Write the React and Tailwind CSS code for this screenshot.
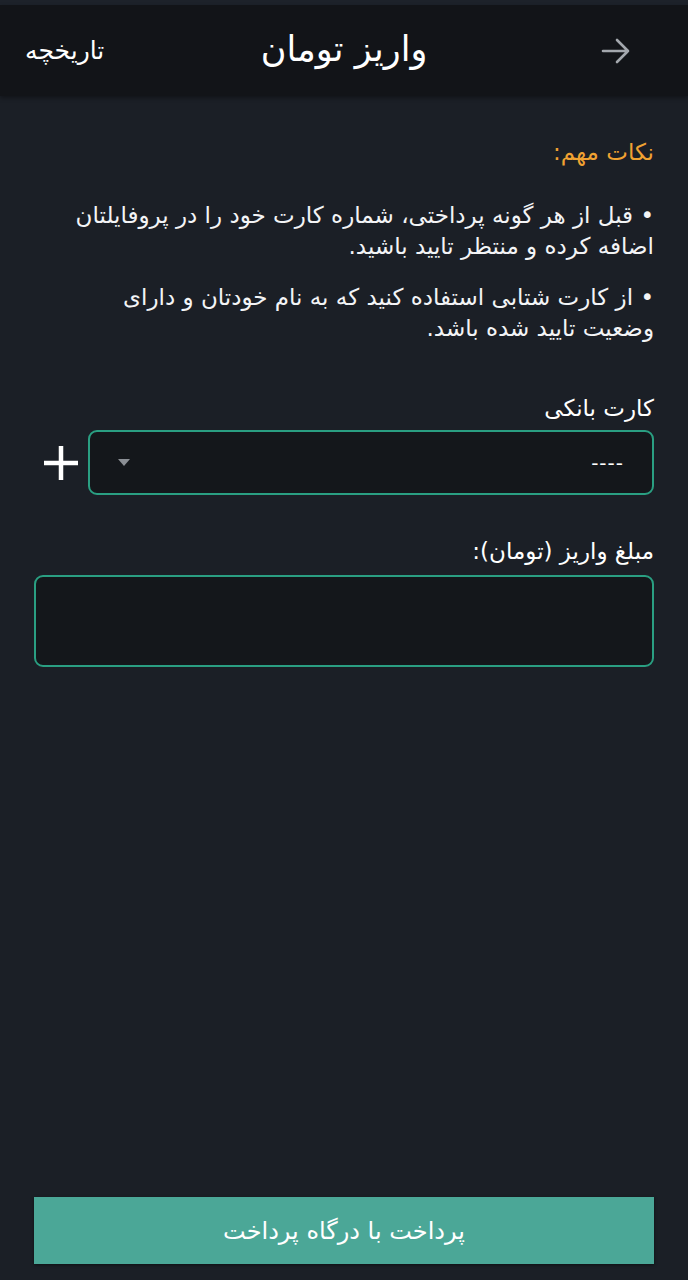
import React from "react";

export default function App() {
  return (
    <div
      dir="rtl"
      className="w-[688px] h-[1280px] bg-[#1b1f26] flex flex-col text-white"
      style={{ fontFamily: '"DejaVu Sans", "Noto Sans", sans-serif' }}
    >
      <div className="h-[5px] bg-[#1d222a]" />
      <header className="h-[91px] bg-[#121418] flex items-center justify-between px-[25px] shadow-[0_2px_4px_rgba(0,0,0,0.35)]">
        <div className="w-[86px] flex justify-start pr-[32px]">
          <svg width="30" height="26" viewBox="0 0 30 26" fill="none" stroke="#a3a7ad" strokeWidth="2.6" strokeLinecap="round" strokeLinejoin="round">
            <path d="M2 13 H27 M16 2 L27 13 L16 24" />
          </svg>
        </div>
        <h1 className="text-[35px] leading-none font-normal text-white pb-[2px]">واریز تومان</h1>
        <div className="w-[86px] flex justify-end text-[25px] leading-none text-white whitespace-nowrap">تاریخچه</div>
      </header>

      <main className="flex-1 flex flex-col px-[34px] pt-[42px] pb-[16px]">
        <div className="text-[23px] leading-[28px] text-[#f0a232]">نکات مهم:</div>
        <p className="mt-[34px] text-[23px] leading-[31px] text-[#f3f4f6] whitespace-nowrap">
          • قبل از هر گونه پرداختی، شماره کارت خود را در پروفایلتان
          <br />
          اضافه کرده و منتظر تایید باشید.
        </p>
        <p className="mt-[20px] text-[23px] leading-[31px] text-[#f3f4f6] whitespace-nowrap">
          • از کارت شتابی استفاده کنید که به نام خودتان و دارای
          <br />
          وضعیت تایید شده باشد.
        </p>

        <label className="mt-[50px] text-[23px] leading-[28px] text-white">کارت بانکی</label>
        <div className="mt-[8px] flex items-center">
          <div className="flex-1 h-[65px] rounded-[9px] border-2 border-[#2a9f82] bg-[#14171b] flex items-center justify-between pr-[28px] pl-[28px]">
            <span className="text-[20px] text-white tracking-[1px]">----</span>
            <svg width="12" height="8" viewBox="0 0 12 8">
              <path d="M0 0 H12 L6 7 Z" fill="#8b8f95" />
            </svg>
          </div>
          <div className="w-[54px] flex justify-center">
            <svg width="34" height="34" viewBox="0 0 34 34" stroke="white" strokeWidth="4.5">
              <path d="M17 0 V34 M0 17 H34" />
            </svg>
          </div>
        </div>

        <label className="mt-[42px] text-[23px] leading-[28px] text-white">مبلغ واریز (تومان):</label>
        <div className="mt-[10px] h-[92px] rounded-[9px] border-2 border-[#2a9f82] bg-[#14171b]" />

        <div className="flex-1" />
        <button className="h-[67px] w-full bg-[#4ba797] text-white text-[24px] flex items-center justify-center shadow-[0_1px_3px_rgba(0,0,0,0.5)]">
          پرداخت با درگاه پرداخت
        </button>
      </main>
    </div>
  );
}
